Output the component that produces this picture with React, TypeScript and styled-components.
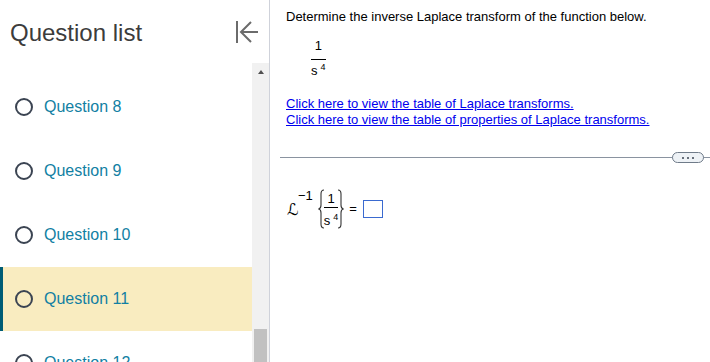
import React from "react";
import styled, { createGlobalStyle } from "styled-components";

const Global = createGlobalStyle`
  html, body { margin: 0; padding: 0; background: #fff; }
  body { font-family: "Liberation Sans", Arial, sans-serif; }
  * { box-sizing: border-box; }
`;

const Page = styled.div`
  display: flex;
  width: 710px;
  height: 362px;
  overflow: hidden;
  background: #fff;
`;

const Sidebar = styled.aside`
  width: 270px;
  flex: none;
  display: flex;
  flex-direction: column;
  border-right: 1px solid #cfd2da;
`;

const Header = styled.div`
  height: 63px;
  flex: none;
  display: flex;
  justify-content: space-between;
  align-items: flex-start;
  padding: 0 11px 0 10px;
`;

const Title = styled.h2`
  margin: 19px 0 0;
  font-size: 24px;
  line-height: 28px;
  font-weight: 400;
  color: #3c3c3c;
`;

const CollapseButton = styled.button`
  margin-top: 21px;
  padding: 0;
  border: 0;
  background: none;
  width: 24px;
  height: 22px;
  display: block;
`;

const ListArea = styled.div`
  flex: 1;
  display: flex;
  min-height: 0;
`;

const List = styled.ul`
  width: 252px;
  flex: none;
  margin: 0;
  padding: 12px 0 0;
  list-style: none;
  overflow: hidden;
`;

const Row = styled.li<{ $active?: boolean }>`
  height: 64px;
  flex: none;
  display: flex;
  align-items: center;
  padding-left: ${(p) => (p.$active ? "12px" : "15px")};
  background: ${(p) => (p.$active ? "#f9ecc0" : "transparent")};
  border-left: ${(p) => (p.$active ? "3px solid #005c75" : "0")};
`;

const Radio = styled.span`
  width: 18px;
  height: 18px;
  border-radius: 50%;
  border: 2px solid #3b4452;
  flex: none;
`;

const RowLabel = styled.span`
  margin-left: 11px;
  font-size: 16px;
  color: #127fa3;
`;

const Scrollbar = styled.div`
  width: 17px;
  flex: none;
  background: #f1f1f1;
  display: flex;
  flex-direction: column;
`;

const ScrollUp = styled.div`
  height: 17px;
  display: flex;
  align-items: center;
  justify-content: center;
  &::before {
    content: "";
    width: 0;
    height: 0;
    border-left: 3.5px solid transparent;
    border-right: 3.5px solid transparent;
    border-bottom: 4px solid #505050;
  }
`;

const ScrollSpacer = styled.div`
  flex: 1;
`;

const Thumb = styled.div`
  height: 33px;
  margin: 0 2px;
  background: #c1c1c1;
`;

const Main = styled.main`
  flex: 1;
  padding: 9px 0 0 10px;
  display: flex;
  flex-direction: column;
  color: #000;
  font-size: 13px;
  line-height: 16px;
`;

const Section = styled.div`
  padding-left: 6px;
`;

const Prompt = styled.p`
  margin: 0;
`;

const Frac = styled.span`
  display: inline-flex;
  flex-direction: column;
  align-items: center;
  padding: 0 1px;
  font-size: 13px;
`;

const Num = styled.span<{ $gap: number }>`
  line-height: 15px;
  padding-bottom: ${(p) => p.$gap}px;
`;

const Bar = styled.span`
  align-self: stretch;
  height: 1px;
  background: #000;
`;

const Den = styled.span<{ $pad: number }>`
  line-height: 15px;
  padding-top: ${(p) => p.$pad}px;
  white-space: nowrap;
`;

const Sup = styled.span`
  font-size: 9px;
  vertical-align: 5px;
  line-height: 0;
  margin-left: 3px;
`;

const GivenFraction = styled.div`
  margin: 13px 0 0 24px;
`;

const Links = styled.div`
  margin-top: 18px;
  display: flex;
  flex-direction: column;
  align-items: flex-start;
`;

const Link = styled.a`
  color: #0000ee;
  text-decoration: underline;
  cursor: pointer;
`;

const Divider = styled.div`
  position: relative;
  margin-top: 29px;
  height: 1px;
  background: #8a93a0;
`;

const MoreButton = styled.button`
  position: absolute;
  right: 6px;
  top: -5px;
  width: 32px;
  height: 11px;
  padding: 0;
  border: 1px solid #6f7b89;
  border-radius: 6px;
  background: #eef2f6;
  display: flex;
  align-items: center;
  justify-content: center;
  gap: 3px;
`;

const Dot = styled.span`
  width: 2px;
  height: 2px;
  border-radius: 50%;
  background: #3b4452;
`;

const Formula = styled.div`
  margin: 30px 0 0 1px;
  height: 42px;
  display: flex;
  align-items: center;
`;

const LaplaceL = styled.span`
  width: 11px;
  flex: none;
  font-family: "DejaVu Sans", "Liberation Serif", serif;
  font-size: 16px;
  line-height: 16px;
  margin-top: 2px;
`;

const Inverse = styled.span`
  align-self: flex-start;
  margin: 0 5px 0 0;
  line-height: 15px;
`;

const Brace = styled.svg`
  width: 7px;
  height: 40px;
  flex: none;
`;

const FormulaFrac = styled.div`
  display: flex;
  margin: 0 -2px;
`;

const Equals = styled.span`
  margin: 0 6px 0 5px;
`;

const AnswerBox = styled.span`
  width: 20px;
  height: 18px;
  border: 1.5px solid #3a6ad0;
  background: #fff;
  display: inline-block;
`;

const questions = [8, 9, 10, 11, 12];

function CollapseIcon() {
  return (
    <svg viewBox="0 0 24 22" width="24" height="22" fill="none" stroke="#6b6b6b" strokeWidth="2">
      <line x1="3" y1="0" x2="3" y2="22" />
      <polyline points="17,1 7,11 17,21" strokeLinejoin="miter" />
      <line x1="7" y1="11" x2="24" y2="11" />
    </svg>
  );
}

function LeftBrace() {
  return (
    <Brace viewBox="0 0 7 40" fill="none" stroke="#333" strokeWidth="1.1">
      <path d="M6 1 C3.5 1 3 2.5 3 5 L3 16 C3 18.5 2.3 19.6 0.8 20 C2.3 20.4 3 21.5 3 24 L3 35 C3 37.5 3.5 39 6 39" />
    </Brace>
  );
}

function RightBrace() {
  return (
    <Brace viewBox="0 0 7 40" fill="none" stroke="#333" strokeWidth="1.1">
      <path d="M1 1 C3.5 1 4 2.5 4 5 L4 16 C4 18.5 4.7 19.6 6.2 20 C4.7 20.4 4 21.5 4 24 L4 35 C4 37.5 3.5 39 1 39" />
    </Brace>
  );
}

export default function App() {
  return (
    <>
      <Global />
      <Page>
        <Sidebar>
          <Header>
            <Title>Question list</Title>
            <CollapseButton aria-label="Collapse question list">
              <CollapseIcon />
            </CollapseButton>
          </Header>
          <ListArea>
            <List>
              {questions.map((q) => (
                <Row key={q} $active={q === 11}>
                  <Radio />
                  <RowLabel>Question {q}</RowLabel>
                </Row>
              ))}
            </List>
            <Scrollbar>
              <ScrollUp />
              <ScrollSpacer />
              <Thumb />
            </Scrollbar>
          </ListArea>
        </Sidebar>
        <Main>
          <Section>
            <Prompt>Determine the inverse Laplace transform of the function below.</Prompt>
            <GivenFraction>
              <Frac>
                <Num $gap={6}>1</Num>
                <Bar />
                <Den $pad={3}>
                  s<Sup>4</Sup>
                </Den>
              </Frac>
            </GivenFraction>
            <Links>
              <Link>Click here to view the table of Laplace transforms.</Link>
              <Link>Click here to view the table of properties of Laplace transforms.</Link>
            </Links>
          </Section>
          <Divider>
            <MoreButton aria-label="More">
              <Dot />
              <Dot />
              <Dot />
            </MoreButton>
          </Divider>
          <Section>
            <Formula>
              <LaplaceL>ℒ</LaplaceL>
              <Inverse>−1</Inverse>
              <LeftBrace />
              <FormulaFrac>
                <Frac>
                  <Num $gap={1}>1</Num>
                  <Bar />
                  <Den $pad={5}>
                    s<Sup>4</Sup>
                  </Den>
                </Frac>
              </FormulaFrac>
              <RightBrace />
              <Equals>=</Equals>
              <AnswerBox />
            </Formula>
          </Section>
        </Main>
      </Page>
    </>
  );
}
